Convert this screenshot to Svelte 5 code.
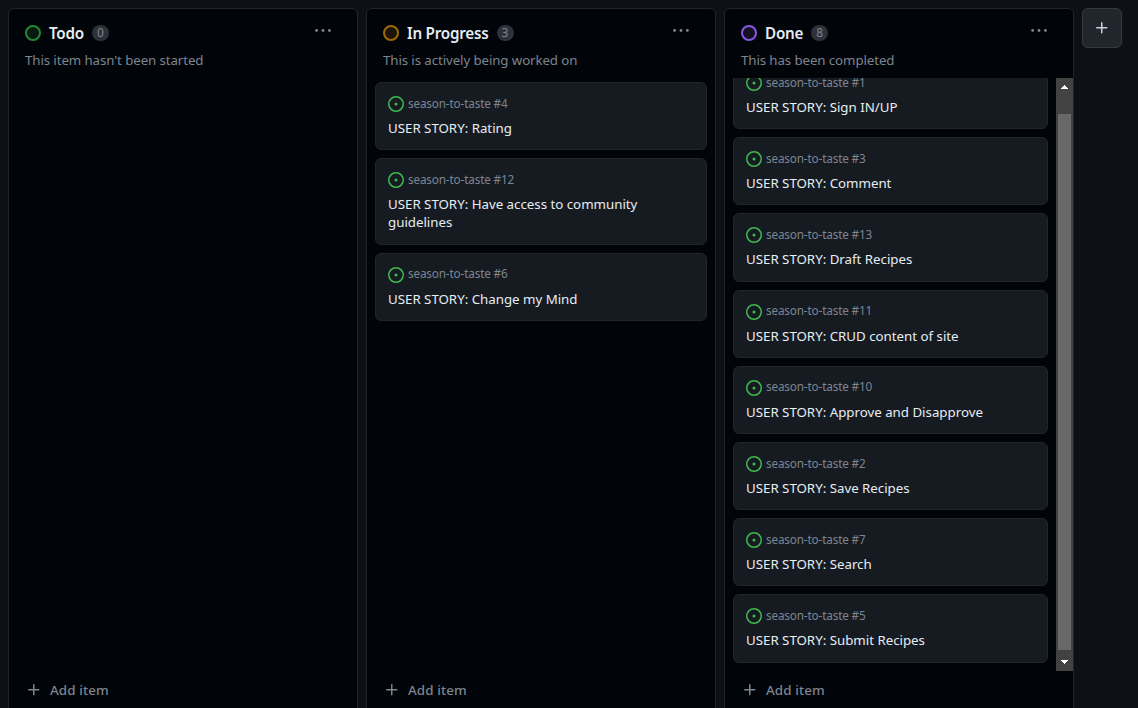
<script>
  const columns = [
    { name: 'Todo', note: "This item hasn't been started", tone: 'green', items: [] },
    {
      name: 'In Progress', note: 'This is actively being worked on', tone: 'amber',
      items: [
        { id: 4, title: 'Rating' },
        { id: 12, title: 'Have access to community guidelines' },
        { id: 6, title: 'Change my Mind' }
      ]
    },
    {
      name: 'Done', note: 'This has been completed', tone: 'purple', scrolls: true,
      items: [
        { id: 1, title: 'Sign IN/UP' },
        { id: 3, title: 'Comment' },
        { id: 13, title: 'Draft Recipes' },
        { id: 11, title: 'CRUD content of site' },
        { id: 10, title: 'Approve and Disapprove' },
        { id: 2, title: 'Save Recipes' },
        { id: 7, title: 'Search' },
        { id: 5, title: 'Submit Recipes' }
      ]
    }
  ];
  const plus = 'M7.75 2a.75.75 0 0 1 .75.75V7h4.25a.75.75 0 0 1 0 1.5H8.5v4.25a.75.75 0 0 1-1.5 0V8.5H2.75a.75.75 0 0 1 0-1.5H7V2.75A.75.75 0 0 1 7.75 2Z';
</script>

<main class="board">
  {#each columns as column}
    <section class="column">
      <header>
        <div class="heading">
          <span class="status {column.tone}"></span>
          <h2>{column.name}</h2>
          <span class="count">{column.items.length}</span>
          <svg class="menu" width="16" height="16" viewBox="0 0 16 16">
            <circle cx="1.6" cy="7.5" r="1.4" /><circle cx="8" cy="7.5" r="1.4" /><circle cx="14.4" cy="7.5" r="1.4" />
          </svg>
        </div>
        <p>{column.note}</p>
      </header>
      <div class="viewport">
        <div class="list" class:scrolled={column.scrolls}>
          {#each column.items as item}
            <article>
              <div class="meta">
                <svg width="16" height="16" viewBox="0 0 16 16">
                  <path d="M8 9.5a1.5 1.5 0 1 0 0-3 1.5 1.5 0 0 0 0 3Z" />
                  <path d="M8 0a8 8 0 1 1 0 16A8 8 0 0 1 8 0ZM1.5 8a6.5 6.5 0 1 0 13 0 6.5 6.5 0 0 0-13 0Z" />
                </svg>
                <span>season-to-taste #{item.id}</span>
              </div>
              <h3>USER STORY: {item.title}</h3>
            </article>
          {/each}
        </div>
        {#if column.scrolls}
          <div class="scrollbar">
            <svg width="17" height="17" viewBox="0 0 17 17" shape-rendering="crispEdges"><path d="M5 11h7v-1h-1V9h-1V8H9V7H8v1H7v1H6v1H5z" /></svg>
            <div class="track"><div class="thumb"></div></div>
            <svg width="17" height="17" viewBox="0 0 17 17" shape-rendering="crispEdges"><path d="M5 6h7v1h-1v1h-1v1H9v1H8V9H7V8H6V7H5z" /></svg>
          </div>
        {/if}
      </div>
      <footer>
        <svg width="16" height="16" viewBox="0 0 16 16"><path d={plus} /></svg>
        <span>Add item</span>
      </footer>
    </section>
  {/each}
  <button aria-label="New column"><svg width="16" height="16" viewBox="0 0 16 16"><path d={plus} /></svg></button>
</main>

<style>
  :global(body) { margin: 0; background: #0d1117; overflow: hidden; }
  .board {
    display: flex; align-items: flex-start; gap: 8px; box-sizing: border-box;
    height: 708px; padding: 8px 0 0 8px; overflow: hidden;
    font-family: "Noto Sans", sans-serif; color: #e6edf3;
  }
  .column {
    display: flex; flex-direction: column; flex: none; box-sizing: border-box;
    width: 350px; height: 706px; border: 1px solid #21262d; border-radius: 6px;
    background: #010409;
  }
  header { height: 69px; padding: 0 16px; box-sizing: border-box; flex: none; }
  .heading { display: flex; align-items: center; padding-top: 12px; height: 24px; }
  .status { width: 16px; height: 16px; box-sizing: border-box; border: 2px solid; border-radius: 50%; }
  .green { border-color: #238636; background: #07190f; }
  .amber { border-color: #9e6a03; background: #1c1408; }
  .purple { border-color: #8957e5; background: #151022; }
  h2 { margin: 0 8px; font-size: 15.2px; font-weight: 600; line-height: 24px; letter-spacing: -0.22px; white-space: nowrap; }
  .count {
    min-width: 17px; box-sizing: border-box; padding: 0 4px; border-radius: 8px; background: #2d3139;
    color: #7d8590; font-size: 12px; line-height: 16px; text-align: center;
  }
  .menu { margin: -5px 10px 0 auto; fill: #7d8590; }
  p { margin: 5px 0 0; font-size: 13.3px; line-height: 21px; letter-spacing: -0.1px; color: #7d8590; white-space: nowrap; }
  .viewport { display: flex; flex: none; height: 593px; overflow: hidden; }
  .list { display: flex; flex-direction: column; gap: 8px; flex: 1; padding: 4px 8px 8px; min-width: 0; }
  .scrolled { margin-top: -21.08px; }
  article {
    flex: none; padding: 12px; border: 1px solid #21262d; border-radius: 6px;
    background: #161b22;
  }
  .meta { display: flex; align-items: center; gap: 4px; height: 16px; padding: 1px 0 3px; margin-bottom: 4px; font-size: 11.7px; letter-spacing: -0.13px; color: #7d8590; line-height: 16px; }
  .meta svg { fill: #3fb950; flex: none; }
  .meta span { margin-top: -2.8px; }
  h3 { margin: 0; font-size: 13.3px; font-weight: 400; line-height: 18.2px; letter-spacing: -0.01px; }
  .scrollbar { display: flex; flex-direction: column; width: 17px; background: #424242; }
  .scrollbar svg { fill: #fff; flex: none; }
  .track { flex: 1; padding: 19px 2px 4px; display: flex; }
  .thumb { flex: 1; background: #686868; }
  footer { display: flex; align-items: center; gap: 8px; padding-left: 17px; height: 38px; color: #7d8590; font-size: 13.4px; font-weight: 500; letter-spacing: 0.1px; }
  footer svg { fill: currentColor; }
  button {
    display: grid; place-items: center; width: 40px; height: 40px; padding: 0;
    border: 1px solid #363b42; border-radius: 6px; background: #21262d;
  }
  button svg { fill: #c9d1d9; }
</style>
